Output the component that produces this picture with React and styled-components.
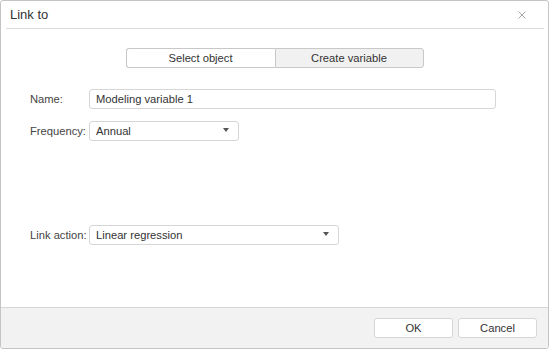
import styled, { createGlobalStyle } from "styled-components";

const Global = createGlobalStyle`
  html, body {
    margin: 0;
    padding: 0;
    background: #ffffff;
  }
  body {
    font-family: "Liberation Sans", Arial, sans-serif;
    font-size: 11.2px;
    color: #333333;
  }
`;

const Dialog = styled.div`
  box-sizing: border-box;
  width: 549px;
  height: 349px;
  border: 1px solid #c4c4c4;
  border-radius: 3px;
  background: #ffffff;
  display: flex;
  flex-direction: column;
  overflow: hidden;
`;

const Header = styled.div`
  height: 27px;
  margin: 0 4px 0 5px;
  padding: 0 17px 0 4px;
  border-bottom: 1px solid #dcdcdc;
  display: flex;
  align-items: center;
  justify-content: space-between;
`;

const Title = styled.div`
  font-size: 13px;
  color: #333333;
  padding-bottom: 1px;
`;

const Close = styled.div`
  width: 10px;
  height: 10px;
  display: flex;
  align-items: center;
  justify-content: center;
`;

const Body = styled.div`
  flex: 1;
  display: flex;
  flex-direction: column;
  padding: 19px 0 0 29px;
`;

const Toggle = styled.div`
  display: flex;
  align-self: center;
  margin-left: -29px;
  margin-bottom: 21px;
`;

const ToggleButton = styled.div`
  box-sizing: border-box;
  width: 149px;
  height: 20px;
  display: flex;
  align-items: center;
  justify-content: center;
  border: 1px solid #c8c8c8;
  background: ${(p) => (p.active ? "#f1f1f1" : "#ffffff")};
  color: #333333;
  border-radius: ${(p) => (p.first ? "3px 0 0 3px" : "0 3px 3px 0")};
  ${(p) => (p.first ? "border-right: none;" : "")}
`;

const Row = styled.div`
  display: flex;
  align-items: center;
  margin-top: ${(p) => p.top || 0}px;
`;

const Label = styled.div`
  width: 59px;
  white-space: nowrap;
  color: #444444;
`;

const Field = styled.div`
  box-sizing: border-box;
  width: ${(p) => p.w}px;
  height: 20px;
  border: 1px solid #d6d6d6;
  border-radius: 3px;
  padding: 0 9px 0 6px;
  display: flex;
  align-items: center;
  justify-content: space-between;
  color: #333333;
`;

const Caret = styled.span`
  width: 0;
  height: 0;
  border-left: 3.5px solid transparent;
  border-right: 3.5px solid transparent;
  border-top: 4px solid #555555;
  margin-top: -2px;
`;

const Footer = styled.div`
  height: 40px;
  border-top: 1px solid #d6d6d6;
  background: #f2f2f2;
  display: flex;
  align-items: center;
  justify-content: flex-end;
  gap: 5px;
  padding: 0 11px 0 0;
`;

const Button = styled.div`
  box-sizing: border-box;
  width: 79px;
  height: 20px;
  border: 1px solid #d6d6d6;
  border-radius: 3px;
  background: #ffffff;
  display: flex;
  align-items: center;
  justify-content: center;
  color: #333333;
`;

export default function App() {
  return (
    <>
      <Global />
      <Dialog>
        <Header>
          <Title>Link to</Title>
          <Close>
            <svg width="8" height="8" viewBox="0 0 8 8">
              <path d="M0.5 0.5 L7.5 7.5 M7.5 0.5 L0.5 7.5" stroke="#a8a8a8" strokeWidth="1" />
            </svg>
          </Close>
        </Header>
        <Body>
          <Toggle>
            <ToggleButton first>Select object</ToggleButton>
            <ToggleButton active>Create variable</ToggleButton>
          </Toggle>
          <Row>
            <Label>Name:</Label>
            <Field w={407}>Modeling variable 1</Field>
          </Row>
          <Row top={12}>
            <Label>Frequency:</Label>
            <Field w={150}>
              Annual
              <Caret />
            </Field>
          </Row>
          <Row top={84}>
            <Label>Link action:</Label>
            <Field w={250}>
              Linear regression
              <Caret />
            </Field>
          </Row>
        </Body>
        <Footer>
          <Button>OK</Button>
          <Button>Cancel</Button>
        </Footer>
      </Dialog>
    </>
  );
}
